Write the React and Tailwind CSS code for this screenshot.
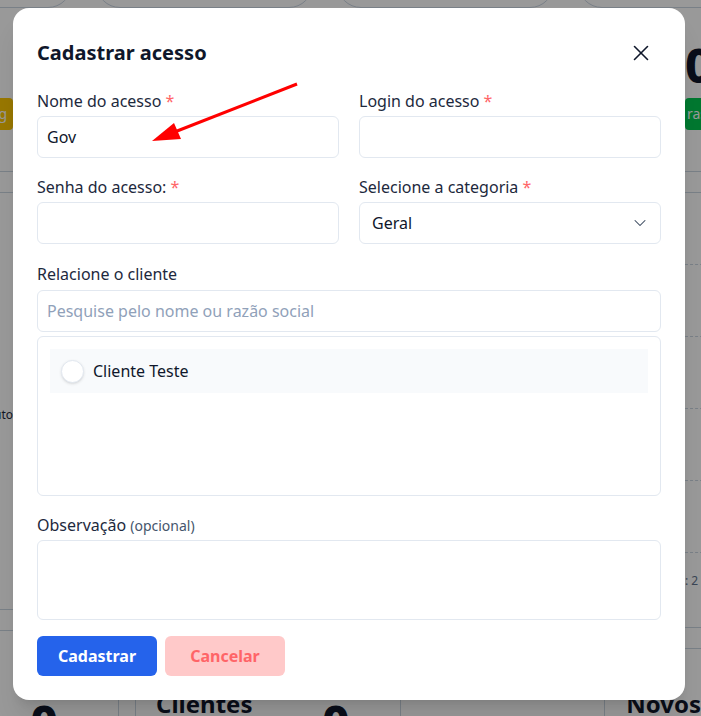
import { X, ChevronDown } from 'lucide-react'

function Label({ children, required }) {
  return (
    <label className="block text-base leading-6 text-slate-800">
      {children}
      {required && <span className="text-red-400"> *</span>}
    </label>
  )
}

function Input({ value, placeholder }) {
  return (
    <div className="mt-[3px] flex h-[42px] items-center rounded-md border border-slate-200 bg-white px-[9px] text-base">
      {value ? (
        <span className="text-slate-900">{value}</span>
      ) : (
        <span className="text-slate-400">{placeholder}</span>
      )}
    </div>
  )
}

// Backdrop page, only edges of it show around the modal
function Backdrop() {
  return (
    <div className="flex h-full flex-col">
      {/* top row of cards */}
      <div className="-ml-[145px] flex h-[8px] gap-[24px] overflow-visible">
        {[0, 1, 2, 3].map(i => (
          <div key={i} className="-mt-[40px] h-[48px] w-[217px] shrink-0 rounded-3xl border border-slate-300 bg-white" />
        ))}
      </div>

      <div className="flex flex-1 justify-between">
        {/* left column */}
        <div className="w-[13px] overflow-hidden">
          <div className="-ml-[137px] flex w-[150px] flex-col">
            <div className="mt-[90px] flex h-8 items-center justify-end rounded bg-yellow-400 px-[6px] text-sm text-white">
              Ranking
            </div>
            <div className="mt-[41px] border-t border-slate-300" />
            <div className="mt-[20px] border-t border-slate-300" />
            <div className="mt-[214px] text-right text-xs text-slate-800">Produto</div>
            <div className="mt-[186px] border-t border-slate-300" />
            <div className="mt-[20px] border-t border-slate-300" />
          </div>
        </div>

        {/* right column */}
        <div className="w-[16px] overflow-hidden">
          <div className="flex w-[200px] flex-col">
            <div className="mt-[33px] text-5xl font-extrabold leading-[48px] text-slate-900">0</div>
            <div className="mt-[9px] flex h-8 items-center rounded bg-green-500 pl-[2px] text-sm text-white">
              rascunho
            </div>
            <div className="mt-[41px] border-t border-slate-300" />
            <div className="mt-[20px] border-t border-slate-300" />
            {[0, 1, 2, 3, 4].map(i => (
              <div key={i} className="mt-[71px] border-t border-dashed border-slate-300" />
            ))}
            <div className="mt-[20px] text-xs leading-4 text-slate-500">: 2</div>
            <div className="mt-[38px] border-t border-slate-300" />
            <div className="mt-[20px] border-t border-slate-300" />
          </div>
        </div>
      </div>

      {/* bottom stat row */}
      <div className="flex h-[26px] items-start">
        <div className="flex h-full w-[120px] justify-end border-r border-slate-300 pr-[60px]">
          <span className="mt-[8px] text-5xl font-extrabold leading-[48px] text-slate-900">0</span>
        </div>
        <div className="ml-[16px] flex h-full w-[269px] justify-between border-x border-slate-300 pl-[20px] pr-[50px]">
          <span className="text-2xl font-bold leading-[28px] text-slate-900">Clientes</span>
          <span className="mt-[8px] text-5xl font-extrabold leading-[48px] text-slate-900">0</span>
        </div>
        <div className="h-full w-[208px] border-r border-slate-300" />
        <div className="pl-[21px]">
          <span className="text-2xl font-bold leading-[28px] text-slate-900">Novos</span>
        </div>
      </div>
    </div>
  )
}

export default function App() {
  return (
    <div className="relative h-[716px] w-full overflow-hidden bg-white font-['Noto_Sans',sans-serif]">
      <Backdrop />

      {/* overlay + modal */}
      <div className="absolute inset-0 bg-black/40">
        <div className="ml-[13px] mt-[8px] w-[672px] rounded-2xl bg-white px-6 pb-6 pt-[25px] shadow-xl">
          <div className="flex items-center justify-between">
            <h2 className="text-xl font-bold leading-7 text-slate-900">Cadastrar acesso</h2>
            <button className="p-[7px] text-slate-900">
              <X size={26} strokeWidth={1.5} />
            </button>
          </div>

          <div className="mt-[16px] grid grid-cols-2 gap-x-5 gap-y-[17px]">
            <div>
              <Label required>Nome do acesso</Label>
              <Input value="Gov" />
            </div>
            <div>
              <Label required>Login do acesso</Label>
              <Input />
            </div>
            <div>
              <Label required>Senha do acesso:</Label>
              <Input />
            </div>
            <div>
              <Label required>Selecione a categoria</Label>
              <div className="mt-[3px] flex h-[42px] items-center justify-between rounded-md border border-slate-200 bg-white pl-3 pr-[10px] text-base text-slate-900">
                <span>Geral</span>
                <ChevronDown size={20} strokeWidth={1.25} className="text-slate-700" />
              </div>
            </div>
          </div>

          <div className="mt-[18px]">
            <Label>Relacione o cliente</Label>
            <div className="mt-[4px] flex h-[42px] items-center rounded-md border border-slate-200 bg-white px-[9px] text-base text-slate-400">
              Pesquise pelo nome ou razão social
            </div>
            <div className="mt-[4px] h-[160px] rounded-md border border-slate-200 p-3">
              <div className="flex h-[44px] items-center gap-[9px] bg-slate-50 pl-[11px]">
                <span className="h-[23px] w-[23px] rounded-full border border-slate-200 bg-white shadow-sm" />
                <span className="text-base text-slate-900">Cliente Teste</span>
              </div>
            </div>
          </div>

          <div className="mt-[17px]">
            <label className="block text-base leading-6 text-slate-800">
              Observação <span className="text-sm text-slate-600">(opcional)</span>
            </label>
            <div className="mt-[3px] h-[80px] rounded-md border border-slate-200 bg-white" />
          </div>

          <div className="mt-4 flex gap-2">
            <button className="h-10 w-[120px] rounded-md bg-[#2563eb] text-base font-bold text-white">
              Cadastrar
            </button>
            <button className="h-10 w-[120px] rounded-md bg-red-200 text-base font-bold text-red-400">
              Cancelar
            </button>
          </div>
        </div>
      </div>

      {/* red annotation arrow */}
      <svg className="pointer-events-none absolute inset-0" width="701" height="716">
        <line x1="297" y1="84" x2="172" y2="133" stroke="#ff0000" strokeWidth="3" />
        <polygon points="152,141 174,123 181,139" fill="#ff0000" />
      </svg>
    </div>
  )
}
